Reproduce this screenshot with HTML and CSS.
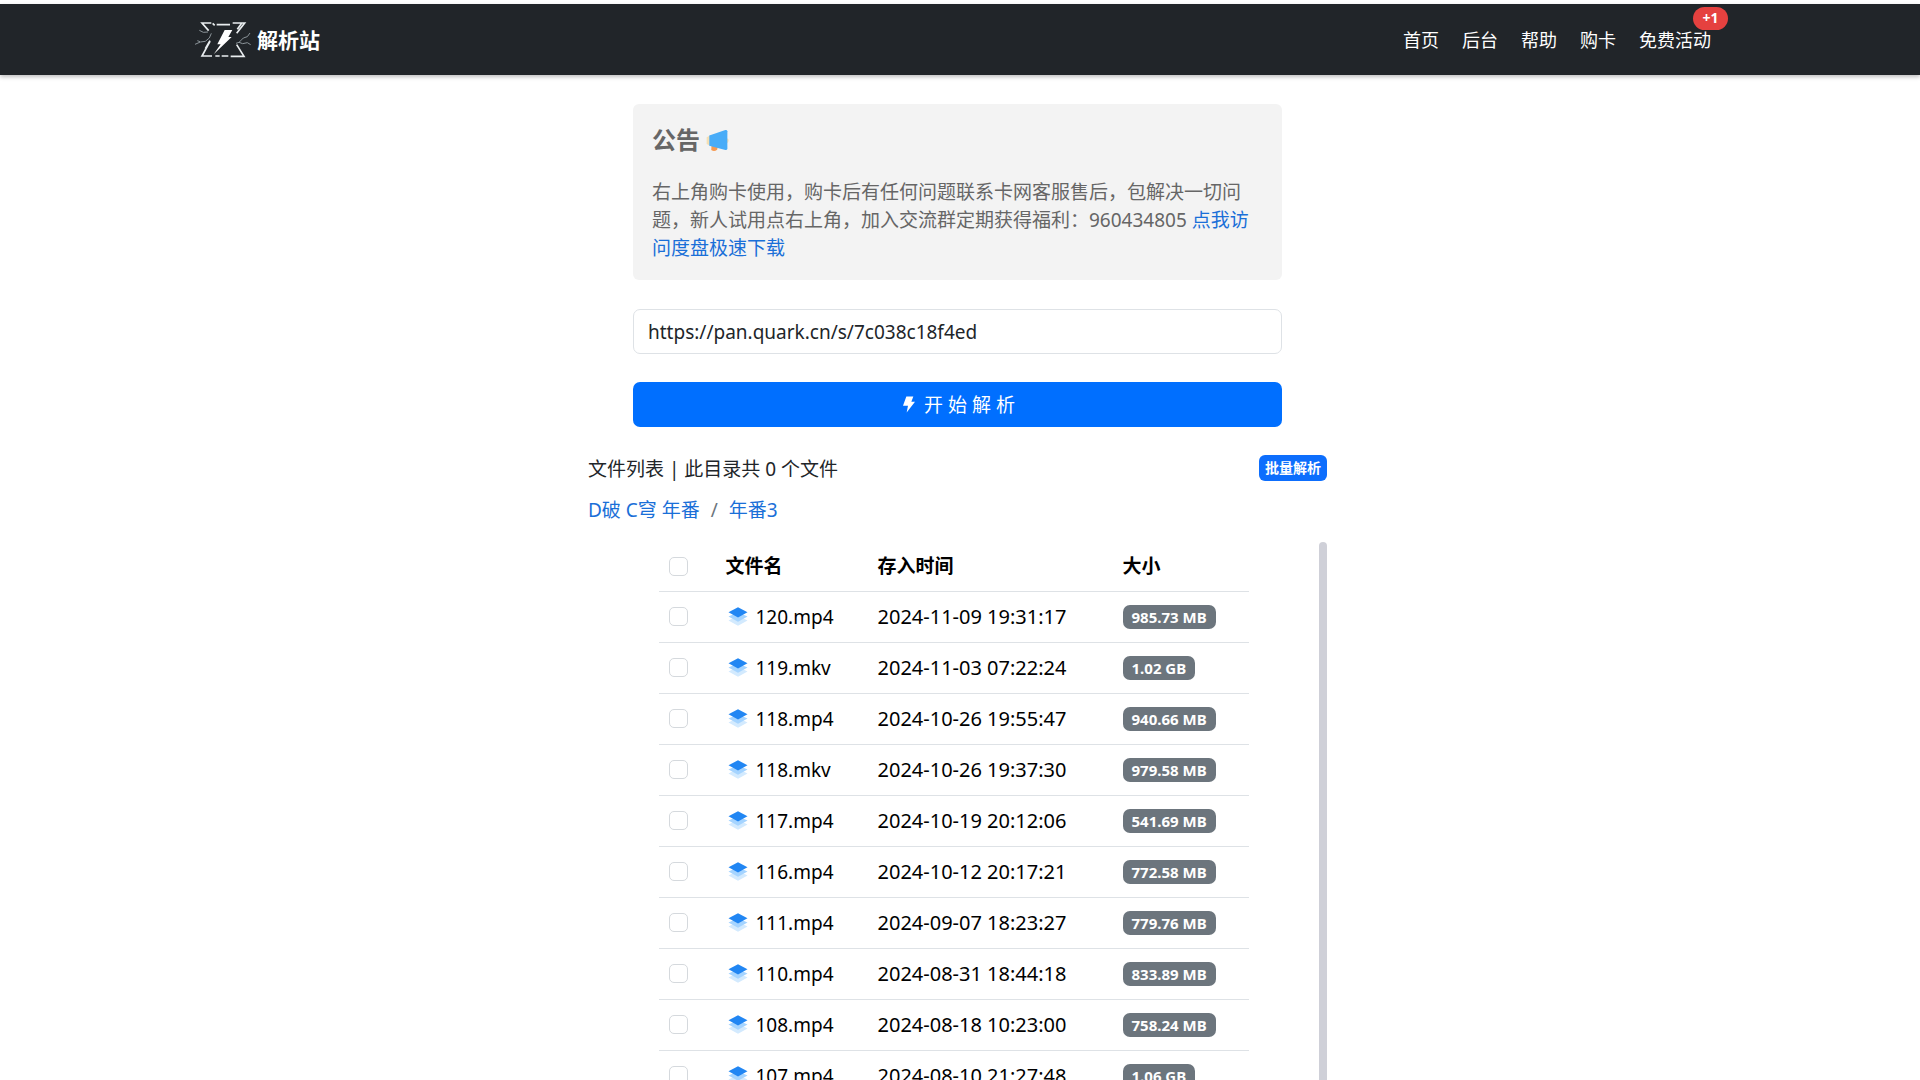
FILE: index.html
```html
<!DOCTYPE html>
<html lang="zh-CN">
<head>
<meta charset="utf-8">
<meta name="viewport" content="width=device-width, initial-scale=1">
<title>解析站</title>
<link rel="stylesheet" href="styles.css">
</head>
<body>
<svg class="sprite" aria-hidden="true">
  <symbol id="layers" viewBox="0 0 60 58">
    <path d="M1 41 30 27 59 41 30 57Z" fill="#d3eafe"/>
    <path d="M1 29 30 16 59 29 30 45Z" fill="#a5d4ff"/>
    <path d="M1 16 30 1 59 16 30 32Z" fill="#2186f3"/>
  </symbol>
</svg>
<header class="site-header">
  <div class="header-inner">
    <a class="brand" href="#">
      <svg class="logo" viewBox="42 62 174 117" aria-hidden="true">
        <g fill="none" stroke="#e9edef" stroke-width="5">
          <path d="M86 94 66 71H94M98 72l6 6M110 76H150M158 71H194L170 102M185 72l-13 18"/>
          <path d="M90 126 66 170H96M76 148l14-24M106 170H119M125 170H145M152 171H192L170 136"/>
        </g>
        <path d="M134 92H157L145 113H155L101 165 122 135H112Z" fill="#fff"/>
        <g fill="none" stroke="#8b9499" stroke-width="3">
          <path d="M58 93 70 99 84 98M94 102 88 116 76 126 61 128 45 135M60 127 52 124"/>
          <path d="M210 101 202 112 190 116 177 129 168 132M177 129 188 133 202 130 212 136"/>
        </g>
      </svg>
      <span>解析站</span>
    </a>
    <nav class="nav">
      <a href="#">首页</a>
      <a href="#">后台</a>
      <a href="#">帮助</a>
      <a href="#">购卡</a>
      <a href="#" class="promo">免费活动<span class="count">+1</span></a>
    </nav>
  </div>
</header>
<main class="page">
  <section class="notice">
    <h1>公告
      <svg class="horn" viewBox="0 0 70 68" aria-hidden="true">
        <path d="M12 19 2 24V45L12 50Z" fill="#f3dfb4"/>
        <path d="M63 27q7 1 6 8t-6 7Z" fill="#f3dfb4"/>
        <path d="M17 48 36 53 34 62q-9 8-18 1Z" fill="#f79a52"/>
        <path d="M10 19 59 2q5-1 6 4V59q-1 5-6 4L10 50Z" fill="#48acf8"/>
      </svg>
    </h1>
    <p>右上角购卡使用，购卡后有任何问题联系卡网客服售后，包解决一切问题，新人试用点右上角，加入交流群定期获得福利：960434805 <a href="#">点我访问度盘极速下载</a></p>
  </section>
  <form class="parse-form">
    <input class="url" type="text" aria-label="分享链接" value="https://pan.quark.cn/s/7c038c18f4ed">
    <button class="submit" type="button">
      <svg class="bolt" viewBox="0 0 36 50" aria-hidden="true"><path d="M10 1H31L25 17H36L11 49 15 29H0Z" fill="#fff"/></svg>
      <span>开 始 解 析</span>
    </button>
  </form>
  <section class="files">
    <div class="files-head">
      <span>文件列表 | 此目录共 0 个文件</span>
      <button class="batch" type="button">批量解析</button>
    </div>
    <nav class="crumbs" aria-label="目录"><a href="#">D破 C穹 年番</a><span>/</span><a href="#">年番3</a></nav>
    <div class="pane">
      <div class="pane-body">
        <table>
          <colgroup><col class="c-check"><col class="c-name"><col class="c-time"><col></colgroup>
          <thead>
            <tr><th><input type="checkbox" aria-label="全选"></th><th>文件名</th><th>存入时间</th><th>大小</th></tr>
          </thead>
          <tbody>
            <tr><td><input type="checkbox" aria-label="120.mp4"></td><td><span class="file"><svg><use href="#layers"/></svg>120.mp4</span></td><td class="time">2024-11-09 19:31:17</td><td><span class="size">985.73 MB</span></td></tr>
            <tr><td><input type="checkbox" aria-label="119.mkv"></td><td><span class="file"><svg><use href="#layers"/></svg>119.mkv</span></td><td class="time">2024-11-03 07:22:24</td><td><span class="size">1.02 GB</span></td></tr>
            <tr><td><input type="checkbox" aria-label="118.mp4"></td><td><span class="file"><svg><use href="#layers"/></svg>118.mp4</span></td><td class="time">2024-10-26 19:55:47</td><td><span class="size">940.66 MB</span></td></tr>
            <tr><td><input type="checkbox" aria-label="118.mkv"></td><td><span class="file"><svg><use href="#layers"/></svg>118.mkv</span></td><td class="time">2024-10-26 19:37:30</td><td><span class="size">979.58 MB</span></td></tr>
            <tr><td><input type="checkbox" aria-label="117.mp4"></td><td><span class="file"><svg><use href="#layers"/></svg>117.mp4</span></td><td class="time">2024-10-19 20:12:06</td><td><span class="size">541.69 MB</span></td></tr>
            <tr><td><input type="checkbox" aria-label="116.mp4"></td><td><span class="file"><svg><use href="#layers"/></svg>116.mp4</span></td><td class="time">2024-10-12 20:17:21</td><td><span class="size">772.58 MB</span></td></tr>
            <tr><td><input type="checkbox" aria-label="111.mp4"></td><td><span class="file"><svg><use href="#layers"/></svg>111.mp4</span></td><td class="time">2024-09-07 18:23:27</td><td><span class="size">779.76 MB</span></td></tr>
            <tr><td><input type="checkbox" aria-label="110.mp4"></td><td><span class="file"><svg><use href="#layers"/></svg>110.mp4</span></td><td class="time">2024-08-31 18:44:18</td><td><span class="size">833.89 MB</span></td></tr>
            <tr><td><input type="checkbox" aria-label="108.mp4"></td><td><span class="file"><svg><use href="#layers"/></svg>108.mp4</span></td><td class="time">2024-08-18 10:23:00</td><td><span class="size">758.24 MB</span></td></tr>
            <tr><td><input type="checkbox" aria-label="107.mp4"></td><td><span class="file"><svg><use href="#layers"/></svg>107.mp4</span></td><td class="time">2024-08-10 21:27:48</td><td><span class="size">1.06 GB</span></td></tr>
          </tbody>
        </table>
      </div>
      <div class="rail"></div>
    </div>
  </section>
</main>
</body>
</html>
```

FILE: styles.css
```css
* { box-sizing: border-box; }

body {
  margin: 0;
  padding-top: 4px;
  height: 100vh;
  overflow: hidden;
  background: #fff;
  color: #212529;
  font-family: "Noto Sans", "Noto Sans CJK SC", sans-serif;
  font-size: 19px;
  line-height: 28px;
}

button, input { font: inherit; }
a { color: #1a6fd8; text-decoration: none; }
.sprite { display: none; }

.site-header {
  background: #212529;
  box-shadow: 0 2px 4px rgba(0, 0, 0, .25);
}
.header-inner {
  display: flex;
  align-items: center;
  justify-content: space-between;
  max-width: 1532px;
  height: 71px;
  margin: 0 auto;
  padding-right: 15px;
}
.brand {
  display: flex;
  align-items: center;
  gap: 5px;
  color: #fff;
  font-size: 21px;
  font-weight: 700;
}
.logo { width: 58px; height: 39px; }
.nav { display: flex; gap: 23px; font-size: 18px; }
.nav a { color: #fff; }
.promo { position: relative; }
.count {
  position: absolute;
  top: -19px;
  right: -17px;
  width: 35px;
  height: 23px;
  border-radius: 12px;
  background: #e5413f;
  font-size: 14px;
  font-weight: 700;
  line-height: 22px;
  text-align: center;
}

.page {
  display: flex;
  flex-direction: column;
  align-items: center;
  padding: 29px 5px 0 0;
}
.notice, .parse-form { width: 100%; max-width: 649px; }
.notice {
  padding: 21px 19px 18px;
  border-radius: 6px;
  background: #f3f3f3;
  color: #666;
}
.notice h1 {
  display: flex;
  align-items: center;
  gap: 6px;
  margin: 0 0 23px;
  font-size: 24px;
  line-height: 30px;
}
.horn { width: 23px; height: 23px; }
.notice p { margin: 0; }

.parse-form {
  display: flex;
  flex-direction: column;
  gap: 28px;
  margin-top: 29px;
}
.url {
  width: 100%;
  height: 45px;
  padding: 0 14px;
  border: 1px solid #dee2e6;
  border-radius: 7px;
  color: #212529;
  background: #fff;
}
.submit {
  display: flex;
  align-items: center;
  justify-content: center;
  gap: 9px;
  height: 45px;
  padding: 0 0 0 3px;
  border: 0;
  border-radius: 7px;
  background: #006fff;
  color: #fff;
}
.bolt { width: 12px; height: 17px; }

.files { width: 100%; max-width: 739px; margin-top: 28px; }
.files-head {
  display: flex;
  align-items: flex-start;
  justify-content: space-between;
}
.batch {
  height: 26px;
  padding: 0 6px;
  border: 0;
  border-radius: 6px;
  background: #0d6efd;
  color: #fff;
  font-size: 14px;
  font-weight: 700;
  line-height: 24px;
}
.crumbs { display: flex; gap: 11px; margin-top: 13px; }
.crumbs span { color: #6c757d; }

.pane { display: flex; margin-top: 18px; }
.pane-body { flex: 1; }
.rail {
  width: 8px;
  border-radius: 4px 4px 0 0;
  background: #cfd0d8;
}
table {
  width: 100%;
  max-width: 590px;
  margin: 0 auto;
  border-collapse: collapse;
  table-layout: fixed;
  color: #000;
}
.c-check { width: 57px; }
.c-name { width: 152px; }
.c-time { width: 245px; }
th, td {
  height: 51px;
  padding: 0 10px;
  border-bottom: 1px solid #dee2e6;
  text-align: left;
  vertical-align: middle;
  white-space: nowrap;
}
th { height: 49px; }
.time { font-size: 20px; }
input[type="checkbox"] {
  display: block;
  appearance: none;
  width: 19px;
  height: 19px;
  margin: 0;
  border: 1px solid #d5d9dd;
  border-radius: 5px;
  background: #fff;
}
.file { display: flex; align-items: center; gap: 8px; padding-left: 2px; }
.file svg { width: 20px; height: 19px; }
.size {
  display: block;
  width: fit-content;
  padding: 0 9px;
  border-radius: 7px;
  background: #6c757d;
  color: #fff;
  font-size: 15px;
  font-weight: 700;
  line-height: 24px;
}
```
